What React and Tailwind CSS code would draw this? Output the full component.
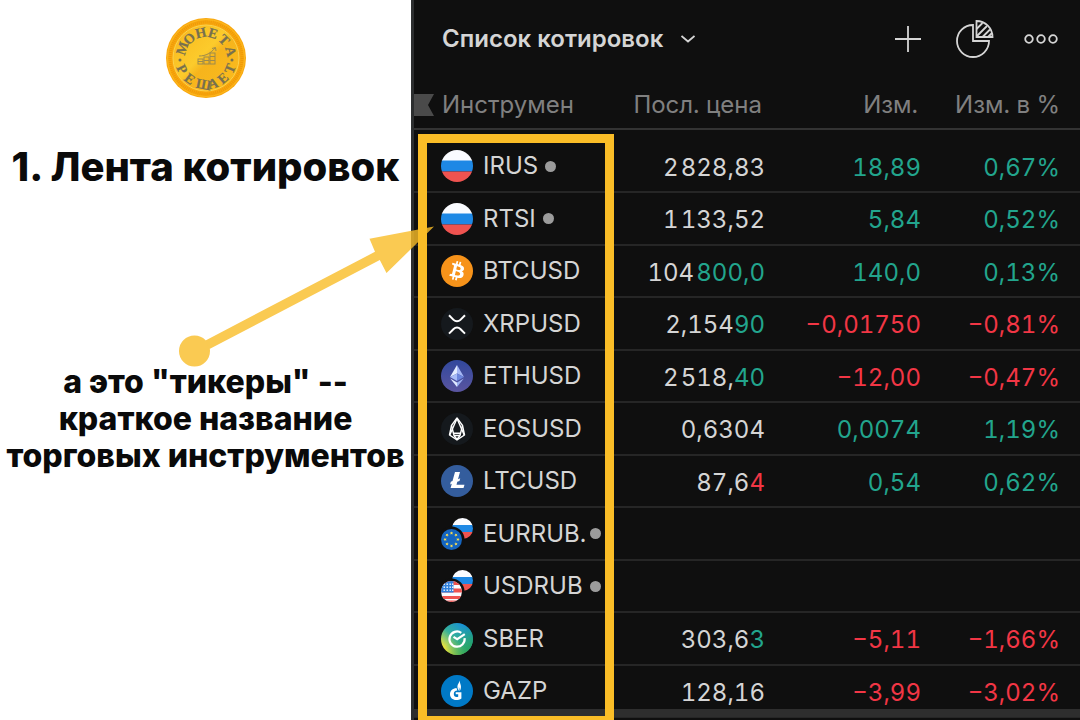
import React from "react";

const GREEN = "text-[#22a58d]";
const RED = "text-[#f23645]";

const quotes = [
  { ticker: "IRUS", icon: RussiaIcon, closed: true, price: "2\u200A828,83", change: "18,89", percent: "0,67%" },
  { ticker: "RTSI", icon: RussiaIcon, closed: true, price: "1\u200A133,52", change: "5,84", percent: "0,52%" },
  { ticker: "BTCUSD", icon: BitcoinIcon, price: "104\u200A", tick: "800,0", change: "140,0", percent: "0,13%" },
  { ticker: "XRPUSD", icon: XrpIcon, price: "2,154", tick: "90", change: "−0,01750", percent: "−0,81%", down: true },
  { ticker: "ETHUSD", icon: EthIcon, price: "2\u200A518,", tick: "40", change: "−12,00", percent: "−0,47%", down: true },
  { ticker: "EOSUSD", icon: EosIcon, price: "0,6304", change: "0,0074", percent: "1,19%" },
  { ticker: "LTCUSD", icon: LitecoinIcon, price: "87,6", tick: "4", tickDown: true, change: "0,54", percent: "0,62%" },
  { ticker: "EURRUB.", icon: EurRubIcon, closed: true },
  { ticker: "USDRUB", icon: UsdRubIcon, closed: true },
  { ticker: "SBER", icon: SberIcon, price: "303,6", tick: "3", change: "−5,11", percent: "−1,66%", down: true },
  { ticker: "GAZP", icon: GazpromIcon, price: "128,16", change: "−3,99", percent: "−3,02%", down: true },
];

function Icon({ children }) {
  return (
    <svg viewBox="0 0 32 32" className="size-8 shrink-0" aria-hidden="true">
      {children}
    </svg>
  );
}

function RussiaIcon() {
  return (
    <Icon>
      <clipPath id="ru">
        <circle cx="16" cy="16" r="16" />
      </clipPath>
      <g clipPath="url(#ru)">
        <rect width="32" height="11" fill="#fafbff" />
        <rect y="10.5" width="32" height="11" fill="#1e88e5" />
        <rect y="21.5" width="32" height="11" fill="#ef5350" />
      </g>
    </Icon>
  );
}

function BitcoinIcon() {
  return (
    <Icon>
      <circle cx="16" cy="16" r="16" fill="#f7931a" />
      <path
        fill="#fff"
        d="M23 13.9c.3-2.1-1.3-3.2-3.4-4l.7-2.8-1.7-.4-.7 2.7-1.3-.3.7-2.8-1.7-.4-.7 2.8-3.5-.9-.4 1.8s1.2.3 1.2.3c.7.2.8.6.8 1l-1.9 7.7c-.1.2-.3.5-.8.4 0 0-1.2-.3-1.2-.3L8.2 20.7l3.4.9-.7 2.8 1.7.4.7-2.8 1.4.3-.7 2.8 1.7.4.7-2.8c2.9.6 5.1.3 6-2.3.7-2.1 0-3.3-1.6-4.1 1.1-.3 2-1 2.2-2.4zM19.100 19.300c-.5 2.1-4.1 1-5.2.7l.9-3.8c1.2.3 4.9.9 4.3 3.1zm.5-5.4c-.5 1.9-3.4.9-4.4.7l.8-3.4c1 .2 4.1.7 3.6 2.7z"
      />
    </Icon>
  );
}

function XrpIcon() {
  return (
    <Icon>
      <circle cx="16" cy="16" r="16" fill="#15191d" />
      <g fill="none" stroke="#fff" strokeWidth="2">
        <path d="M8 7.3l4.6 4.6a4.8 4.8 0 0 0 6.8 0L24 7.3" />
        <path d="M8 25.6l4.6-4.6a4.8 4.8 0 0 1 6.8 0L24 25.6" />
      </g>
    </Icon>
  );
}

function EthIcon() {
  return (
    <Icon>
      <linearGradient id="eth" x1="0" y1="0" x2="0" y2="1">
        <stop offset="0" stopColor="#31489c" />
        <stop offset="1" stopColor="#5a55a0" />
      </linearGradient>
      <circle cx="16" cy="16" r="16" fill="url(#eth)" />
      <path d="M16 5v8.5l-7 3.5z" fill="#e3edff" />
      <path d="M16 5v8.5l7 3.5z" fill="#a5b8f5" />
      <path d="M9 17l7-3.5V21z" fill="#a7bbf7" />
      <path d="M23 17l-7-3.5V21z" fill="#6c86dc" />
      <path d="M9.2 18.5L16 22.5V27z" fill="#dfe9ff" />
      <path d="M22.8 18.5L16 22.5V27z" fill="#9db2f2" />
    </Icon>
  );
}

function EosIcon() {
  return (
    <Icon>
      <circle cx="16" cy="16" r="16" fill="#15191d" />
      <g fill="none" stroke="#fff" strokeWidth="1.4" strokeLinejoin="round">
        <path d="M16 5l-5.5 7.3-2 9.7L16 26.8l7.5-4.8-2-9.7z" />
        <path d="M10.5 12.5L13 22.5l3 4 3-4 2.5-10" />
        <path d="M16 5.5L8.8 22M16 5.5L23.2 22" />
        <path d="M12.5 20.3h7M13 22.5h6" />
      </g>
    </Icon>
  );
}

function LitecoinIcon() {
  return (
    <Icon>
      <circle cx="16" cy="16" r="16" fill="#345d9d" />
      <path fill="#fff" d="M14 7h5l-2 7.2 2.2-.9-.7 2.6-2.2.9-.8 2.9h8L22.5 23H9.6l1.2-4.3-1.7.7.7-2.6 1.7-.7z" />
    </Icon>
  );
}

function PairIcon({ children }) {
  return (
    <Icon>
      <clipPath id="pair-back">
        <circle cx="21.5" cy="10.5" r="10.5" />
      </clipPath>
      <clipPath id="pair-front">
        <circle cx="10.5" cy="21.5" r="10.5" />
      </clipPath>
      <g clipPath="url(#pair-back)">
        <rect x="10" width="22" height="7.5" fill="#fafbff" />
        <rect x="10" y="7" width="22" height="7" fill="#1e88e5" />
        <rect x="10" y="14" width="22" height="8" fill="#ef5350" />
      </g>
      <circle cx="10.5" cy="21.5" r="13" fill="#0f0f0f" />
      <g clipPath="url(#pair-front)">{children}</g>
    </Icon>
  );
}

function EurRubIcon() {
  return (
    <PairIcon>
      <rect y="10" width="22" height="22" fill="#1565c0" />
      {[0, 45, 90, 135, 180, 225, 270, 315].map((angle) => (
        <path
          key={angle}
          transform={`rotate(${angle} 10.5 21.5)`}
          d="M10.5 13.4l.5 1.1 1.2.1-.9.8.3 1.2-1.1-.6-1.1.6.3-1.2-.9-.8 1.2-.1z"
          fill="#ffe04d"
        />
      ))}
    </PairIcon>
  );
}

function UsdRubIcon() {
  return (
    <PairIcon>
      <rect y="10" width="22" height="22" fill="#fafbff" />
      <g fill="#ef5350">
        <rect y="11" width="22" height="4" />
        <rect y="18.5" width="22" height="4" />
        <rect y="26" width="22" height="3" />
        <rect y="30.5" width="22" height="2" />
      </g>
      <rect y="10" width="12.5" height="12.5" fill="#2f80dd" />
      <g fill="#fff">
        {[13.5, 16.5, 19.5].map((y) =>
          [2.5, 5.5, 8.5, 11].map((x) => <rect key={`${x}-${y}`} x={x} y={y} width="1.4" height="1.4" />)
        )}
      </g>
    </PairIcon>
  );
}

function SberIcon() {
  return (
    <Icon>
      <linearGradient id="sber" x1="0.15" y1="0.9" x2="0.85" y2="0.15">
        <stop offset="0.05" stopColor="#f1e63c" />
        <stop offset="0.5" stopColor="#35b09a" />
        <stop offset="1" stopColor="#158fdc" />
      </linearGradient>
      <linearGradient id="sber-side" x1="0.4" y1="0.4" x2="1" y2="0.9">
        <stop offset="0" stopColor="#2aa560" stopOpacity="0" />
        <stop offset="1" stopColor="#21a350" />
      </linearGradient>
      <circle cx="16" cy="16" r="16" fill="url(#sber)" />
      <circle cx="16" cy="16" r="16" fill="url(#sber-side)" />
      <g fill="none" stroke="#fff" strokeWidth="2.2">
        <path d="M20.3 9.8A7.6 7.6 0 1 0 23.6 15.2" />
        <path d="M12.5 13.8l3.7 2.4 7.6-5" />
      </g>
    </Icon>
  );
}

function GazpromIcon() {
  return (
    <Icon>
      <circle cx="16" cy="16" r="16" fill="#0079c6" />
      <path
        fill="#fff"
        d="M18.7 5.5c-.6 2.7-2.3 3.7-2.3 6.3 0 1.5.7 2.5 1.1 4.2.5-1.5.5-2.6.3-4 .9 1.5.9 2.8.5 4.3 1.7-1.6 2.2-4.8 1.1-7.4-.4-1-.7-2-.7-3.4z"
      />
      <path
        fill="#fff"
        d="M15.5 13c-4 .3-6.500 2.900-6.500 6.200 0 3.400 2.600 5.800 6.200 5.800 2 0 3.700-.5 5.200-1.500v-6.200h-5.700v2h2.500v2.500c-2.700.9-4.400-.4-4.400-2.800 0-2 1.200-3.200 3.500-3.400z"
      />
    </Icon>
  );
}

// Places every letter of a word on a circle around the coin's centre.
function ArcWord({ word, from, to, radius, flip }) {
  const step = (to - from) / (word.length - 1);
  const angles = [...word].map((_, i) => from + i * step);
  const turns = angles.map((a) => (flip ? a - 90 : a + 90));
  const rad = (deg) => (deg * Math.PI) / 180;
  // shift back by half a letter along the tangent, so letters are centred
  const xs = angles.map((a, i) => 40 + radius * Math.cos(rad(a)) - 5 * Math.cos(rad(turns[i])));
  const ys = angles.map((a, i) => 40 + radius * Math.sin(rad(a)) - 5 * Math.sin(rad(turns[i])));
  return (
    <text x={xs.join(" ")} y={ys.join(" ")} rotate={turns.join(" ")}>
      {word}
    </text>
  );
}

function CoinLogo() {
  return (
    <svg viewBox="0 0 80 80" className="size-20" role="img" aria-label="Монета решает">
      <linearGradient id="coin" x1="0" y1="0" x2="1" y2="1">
        <stop offset="0" stopColor="#f8b61c" />
        <stop offset="0.45" stopColor="#fccb2c" />
        <stop offset="0.55" stopColor="#f6b41c" />
        <stop offset="1" stopColor="#fbbd1e" />
      </linearGradient>
      <circle cx="40" cy="40" r="40" fill="#f9a80f" />
      <circle cx="40" cy="40" r="36" fill="none" stroke="#ee9a08" strokeWidth="3" strokeDasharray="1 1" />
      <circle cx="40" cy="40" r="38.5" fill="none" stroke="#fdb81e" />
      <circle cx="40" cy="40" r="33" fill="url(#coin)" stroke="#fbd24c" />
      <g fill="#77704f" stroke="#77704f" strokeWidth="0.2" fontFamily="Liberation Serif, serif" fontSize="14">
        <ArcWord word="МОНЕТА" from={-161} to={-15} radius={21} />
        <ArcWord word="РЕШАЕТ" from={153} to={23} radius={31} flip />
      </g>
      <g fill="#77704f">
        <circle cx="14" cy="42" r="1.5" />
        <circle cx="66" cy="42" r="1.5" />
      </g>
      <g fill="none" stroke="#9c8a4c">
        <rect x="32" y="41" width="5" height="5" />
        <rect x="38" y="39" width="5" height="7" />
        <rect x="44" y="35" width="5" height="11" />
        <path d="M32 43.5h5M38 42.5h5M44 38.5h5M44 42.5h5M33 38c7 0 12-3 16-8M46 30.5l3.5-1 .5 3.5" />
      </g>
    </svg>
  );
}

function Arrow() {
  return (
    <svg
      viewBox="0 0 256 142"
      className="pointer-events-none absolute top-[226px] left-[179px] w-[256px] opacity-80"
      aria-hidden="true"
    >
      <g fill="#fabd27">
        <circle cx="15.5" cy="125" r="15.5" />
        <path d="M26.5 114.5L196 25.8 190.5 12.8 255 .5 207.5 47 200.8 34 30.5 123z" />
      </g>
    </svg>
  );
}

function QuoteRow({ quote }) {
  const { ticker, icon: TickerIcon, closed, price, tick, tickDown, change, percent, down } = quote;
  const color = down ? RED : GREEN;
  return (
    <tr className="odd:h-[52px] even:h-[53px] [&>*]:border-b-2 [&>*]:border-[#262626]">
      <th scope="row" className="pl-[27px] text-left font-normal">
        <div className="flex items-center">
          <TickerIcon />
          <span className="ml-[10px] max-w-[100px] whitespace-nowrap">{ticker}</span>
          {closed && <span className="ml-[7px] size-[11px] shrink-0 rounded-full bg-[#9c9c9c]" />}
        </div>
      </th>
      <td className="pt-[3px]">
        {price}
        {tick && <span className={tickDown ? RED : GREEN}>{tick}</span>}
      </td>
      <td className={`pt-[3px] ${color}`}>{change}</td>
      <td className={`pt-[3px] pr-5 ${color}`}>{percent}</td>
    </tr>
  );
}

function Watchlist() {
  return (
    <section className="relative min-w-0 border-l-[3px] border-[#2c2e2f] bg-[#0f0f0f] font-['Inter',sans-serif] text-2xl text-[#d5d5d5]">
      <header className="flex h-[77px] items-center justify-between pr-[22px] pl-7">
        <button type="button" className="flex items-center gap-[18px] font-semibold">
          Список котировок
          <svg viewBox="0 0 14 8" className="w-[14px]" fill="none" stroke="currentColor" strokeWidth="1.8">
            <path d="M.5 1L7 6.5 13.5 1" />
          </svg>
        </button>
        <div className="flex items-center">
          <button type="button" aria-label="Добавить">
            <svg viewBox="0 0 26 26" className="size-[26px]" stroke="currentColor" strokeWidth="1.8">
              <path d="M0 13h26M13 0v26" />
            </svg>
          </button>
          <button type="button" aria-label="Распределение" className="ml-[35px]">
            <svg viewBox="0 0 38 38" className="size-[38px]" fill="none" stroke="currentColor" strokeWidth="1.8">
              <path d="M17 5v16h16A16 16 0 1 1 17 5z" />
              <path d="M20.5 1v16h16a16 16 0 0 0-16-16z" />
              <path d="M20.5 9l6-6M20.5 16.5L31 6M26.5 17l7.5-7.5M32 17l4-4" />
            </svg>
          </button>
          <button type="button" aria-label="Ещё" className="ml-[30px]">
            <svg viewBox="0 0 34 10" className="w-[34px]" fill="none" stroke="currentColor" strokeWidth="1.8">
              <circle cx="5" cy="5" r="3.8" />
              <circle cx="17" cy="5" r="3.8" />
              <circle cx="29" cy="5" r="3.8" />
            </svg>
          </button>
        </div>
      </header>

      <table className="w-full table-fixed border-separate border-spacing-0 text-right tabular-nums">
        <thead className="text-[#808080]">
          <tr className="h-[53px] [&>*]:border-b-2 [&>*]:border-[#333333] [&>*]:pt-1 [&>*]:font-normal">
            <th scope="col" className="w-[200px] text-left">
              <div className="flex items-center gap-2">
                <svg viewBox="0 0 20 22" className="w-5" fill="#4a4a4a" aria-hidden="true">
                  <path d="M0 0h20l-6 11 6 11H0z" />
                </svg>
                Инструмен
              </div>
            </th>
            <th scope="col" className="w-[151px] pr-[3px]">Посл. цена</th>
            <th scope="col" className="w-[156px] pr-[3px]">Изм.</th>
            <th scope="col" className="pr-5">Изм. в %</th>
          </tr>
        </thead>
        <tbody className="before:block before:h-[11px] before:content-['']">
          {quotes.map((quote) => (
            <QuoteRow key={quote.ticker} quote={quote} />
          ))}
        </tbody>
      </table>

      <div className="absolute inset-x-0 bottom-[3px] h-2 bg-[#2e2e2e]" />
      {/* highlight around the ticker column */}
      <div className="pointer-events-none absolute top-[134px] bottom-0 left-1 w-[196px] border-[9px] border-b-4 border-[#fabd27]" />
    </section>
  );
}

const App = () => {
  return (
    <main className="relative grid min-h-screen grid-cols-[411fr_669fr] bg-white">
      <section className="flex min-w-0 flex-col items-center pt-[18px] text-center font-['Inter',sans-serif] font-extrabold text-[#0a0a0a]">
        <CoinLogo />
        <h1 className="mt-[45px] text-[40px] leading-[48px] whitespace-nowrap">1. Лента котировок</h1>
        <p className="mt-[172px] text-[32px] leading-[37px] whitespace-nowrap">
          а это "тикеры" --
          <br />
          краткое название
          <br />
          торговых инструментов
        </p>
      </section>
      <Watchlist />
      <Arrow />
    </main>
  );
};

export default App;
